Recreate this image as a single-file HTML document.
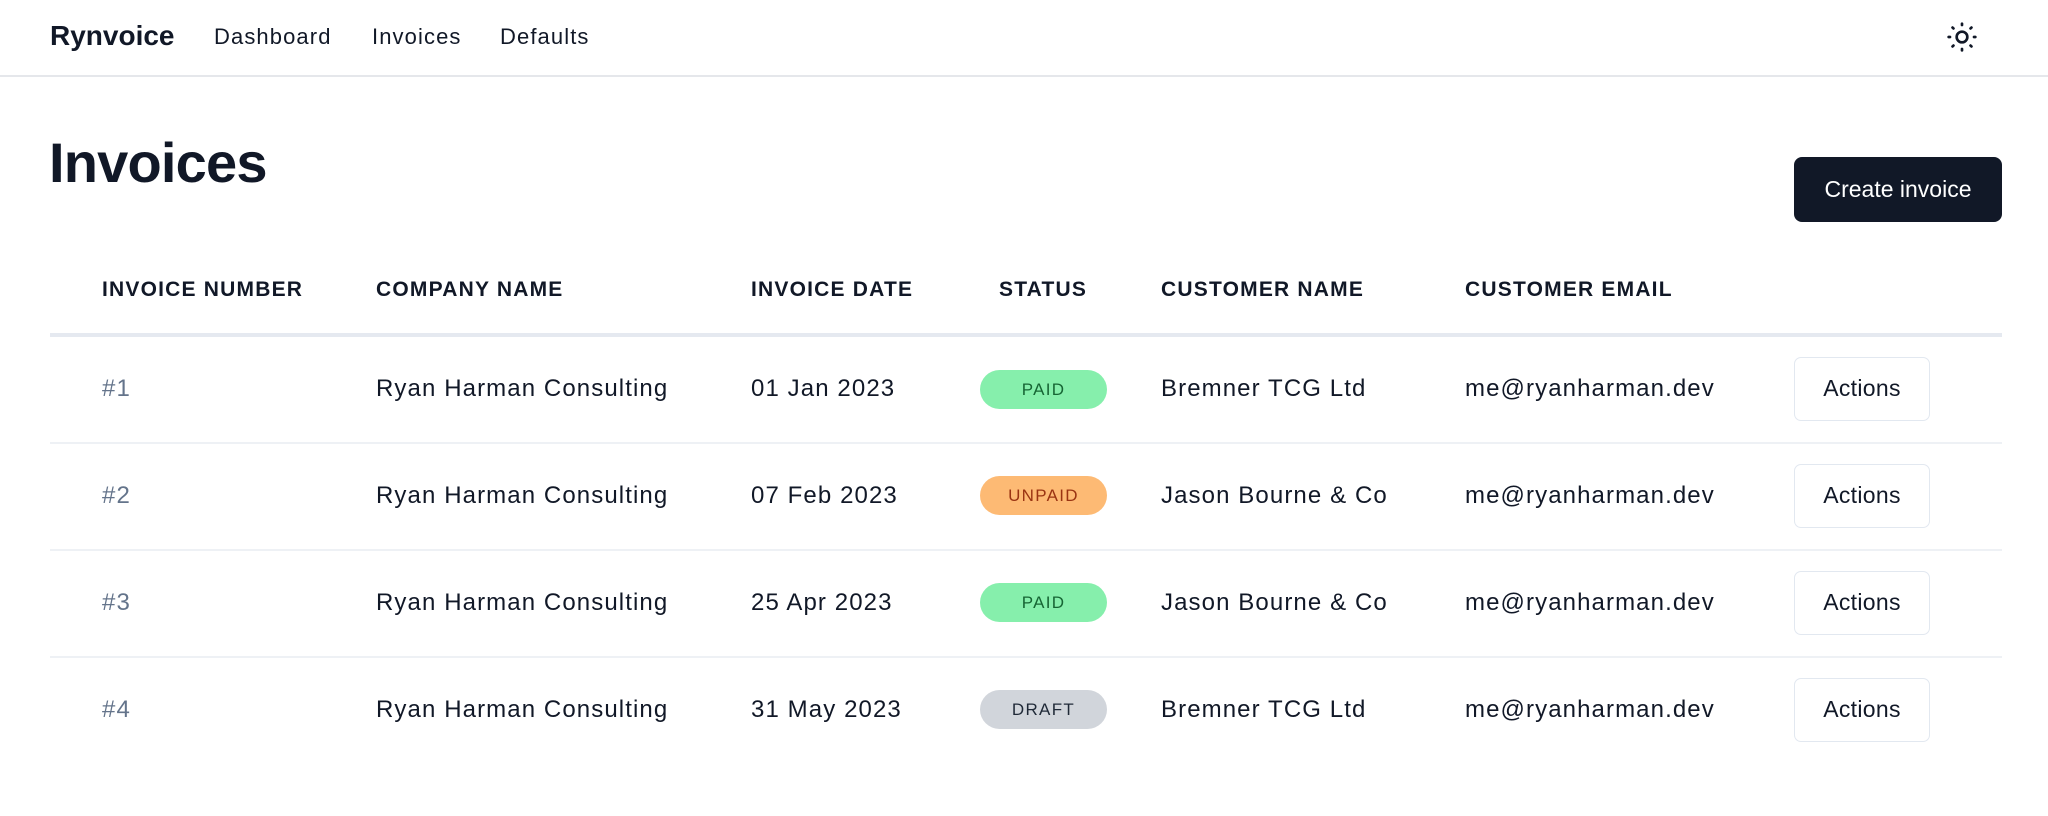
<!DOCTYPE html>
<html><head><meta charset="utf-8"><style>
*{margin:0;padding:0;box-sizing:border-box}
body{width:2048px;height:816px;background:#fff;font-family:"Liberation Sans",Arial,sans-serif;color:#111827;position:relative;overflow:hidden}
.a{position:absolute;white-space:nowrap}
.nav{font-size:22px;top:24px;letter-spacing:1.1px}
.hdr{font-size:21px;font-weight:bold;top:278px;letter-spacing:1.2px;color:#111827}
.cell{font-size:24px;letter-spacing:1.1px;line-height:30px}
.num{color:#64748b}
.badge{position:absolute;left:980px;width:127px;height:39px;border-radius:20px;font-size:17px;letter-spacing:1.3px;text-align:center;line-height:39px}
.paid{background:#86efac;color:#166534}
.unpaid{background:#fdba74;color:#9a3412}
.draft{background:#d1d5db;color:#1f2937}
.act{position:absolute;left:1794px;width:136px;height:64px;border:1.5px solid #e2e8f0;border-radius:7px;font-size:23px;text-align:center;line-height:61px;letter-spacing:.3px}
.line{position:absolute;left:50px;width:1952px;height:1.5px;background:#eef1f5}
</style></head><body>
<div class="a" style="left:50px;top:20px;font-size:28px;font-weight:bold">Rynvoice</div>
<div class="a nav" style="left:214px">Dashboard</div>
<div class="a nav" style="left:372px">Invoices</div>
<div class="a nav" style="left:500px">Defaults</div>
<svg class="a" style="left:1946px;top:21px" width="32" height="32" viewBox="0 0 24 24" fill="none" stroke="#111827" stroke-width="2" stroke-linecap="round"><circle cx="12" cy="12" r="4"/><path d="M12 2v1M12 21v1M4.9 4.9l.7.7M18.4 18.4l.7.7M2 12h1M21 12h1M4.9 19.1l.7-.7M18.4 5.6l.7-.7"/></svg>
<div style="position:absolute;left:0;top:75px;width:2048px;height:2px;background:#e5e7eb"></div>
<div class="a" style="left:49px;top:130px;font-size:56px;font-weight:bold;letter-spacing:-.8px">Invoices</div>
<div class="a" style="left:1794px;top:157px;width:208px;height:65px;background:#111827;border-radius:8px;color:#fff;font-size:23px;text-align:center;line-height:65px">Create invoice</div>
<div class="a hdr" style="left:102px">INVOICE NUMBER</div>
<div class="a hdr" style="left:376px">COMPANY NAME</div>
<div class="a hdr" style="left:751px">INVOICE DATE</div>
<div class="a hdr" style="left:999px">STATUS</div>
<div class="a hdr" style="left:1161px">CUSTOMER NAME</div>
<div class="a hdr" style="left:1465px">CUSTOMER EMAIL</div>
<div style="position:absolute;left:50px;top:333px;width:1952px;height:4px;background:#e5e9f0"></div>

<div class="a cell num" style="left:102px;top:374px">#1</div>
<div class="a cell" style="left:376px;top:374px">Ryan Harman Consulting</div>
<div class="a cell" style="left:751px;top:374px">01 Jan 2023</div>
<div class="badge paid" style="top:370px">PAID</div>
<div class="a cell" style="left:1161px;top:374px">Bremner TCG Ltd</div>
<div class="a cell" style="left:1465px;top:374px">me@ryanharman.dev</div>
<div class="act" style="top:357px">Actions</div>
<div class="line" style="top:442px"></div>

<div class="a cell num" style="left:102px;top:481px">#2</div>
<div class="a cell" style="left:376px;top:481px">Ryan Harman Consulting</div>
<div class="a cell" style="left:751px;top:481px">07 Feb 2023</div>
<div class="badge unpaid" style="top:476px">UNPAID</div>
<div class="a cell" style="left:1161px;top:481px">Jason Bourne &amp; Co</div>
<div class="a cell" style="left:1465px;top:481px">me@ryanharman.dev</div>
<div class="act" style="top:464px">Actions</div>
<div class="line" style="top:549px"></div>

<div class="a cell num" style="left:102px;top:588px">#3</div>
<div class="a cell" style="left:376px;top:588px">Ryan Harman Consulting</div>
<div class="a cell" style="left:751px;top:588px">25 Apr 2023</div>
<div class="badge paid" style="top:583px">PAID</div>
<div class="a cell" style="left:1161px;top:588px">Jason Bourne &amp; Co</div>
<div class="a cell" style="left:1465px;top:588px">me@ryanharman.dev</div>
<div class="act" style="top:571px">Actions</div>
<div class="line" style="top:656px"></div>

<div class="a cell num" style="left:102px;top:695px">#4</div>
<div class="a cell" style="left:376px;top:695px">Ryan Harman Consulting</div>
<div class="a cell" style="left:751px;top:695px">31 May 2023</div>
<div class="badge draft" style="top:690px">DRAFT</div>
<div class="a cell" style="left:1161px;top:695px">Bremner TCG Ltd</div>
<div class="a cell" style="left:1465px;top:695px">me@ryanharman.dev</div>
<div class="act" style="top:678px">Actions</div>
</body></html>
